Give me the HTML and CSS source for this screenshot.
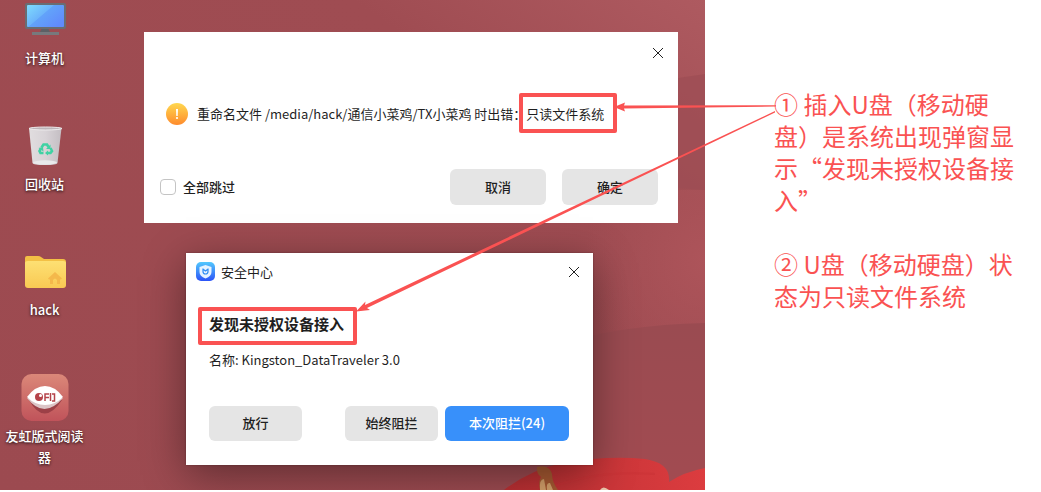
FILE: index.html
```html
<!DOCTYPE html>
<html lang="zh-CN">
<head>
<meta charset="utf-8">
<meta name="viewport" content="width=device-width, initial-scale=1">
<title>U盘只读问题</title>
<link rel="stylesheet" href="styles.css">
</head>
<body>
<main class="page">
  <section class="desktop">
    <svg class="wallpaper" viewBox="0 0 705 490" preserveAspectRatio="none" aria-hidden="true">
      <defs>
        <linearGradient id="sky" x1="0" y1="1" x2="1" y2="0">
          <stop offset="0" stop-color="#9c4a50"/><stop offset=".75" stop-color="#9f4c52"/><stop offset="1" stop-color="#ae5a60"/>
        </linearGradient>
        <linearGradient id="band" x1="0" y1="0" x2="0" y2="1">
          <stop offset="0" stop-color="#9a4b51"/><stop offset="1" stop-color="#a24b51"/>
        </linearGradient>
        <radialGradient id="glow" cx="1" cy=".5" r="1">
          <stop offset="0" stop-color="#ad545a"/><stop offset="1" stop-color="#ad545a" stop-opacity="0"/>
        </radialGradient>
        <linearGradient id="petal" x1="0" y1="0" x2="1" y2="0">
          <stop offset="0" stop-color="#b92f32"/><stop offset="1" stop-color="#dc3c3f"/>
        </linearGradient>
      </defs>
      <rect width="705" height="490" fill="url(#sky)"/>
      <path d="M678 78L705 74V190L678 188Z" fill="#9d4d54" opacity=".7"/>
      <path d="M585 190H705V330H585Z" fill="url(#glow)"/>
      <path d="M560 344Q620 325 705 323V490H560Z" fill="url(#band)"/>
      <path d="M504 490Q530 470 562 463Q608 455 645 459Q671 463 669 482Q684 472 705 468V490Z" fill="url(#petal)"/>
      <path d="M545 490Q590 470 655 474" fill="none" stroke="#c93236" stroke-width="2" opacity=".5"/>
      <path d="M537 467Q549 464 552 474Q552 482 558 490H540Q538 482 541 477Q536 473 537 467Z" fill="#a85a32"/>
      <path d="M540 490Q539 479 544 479L546 490ZM547 490Q546 482 550 483L553 490Z" fill="#d5a06a"/>
      <path d="M600 490Q603 485 609 490Z" fill="#ecc9ae"/>
    </svg>

    <ul class="shortcuts">
      <li class="shortcut">
        <svg class="shortcut-icon" viewBox="0 0 48 48" aria-hidden="true">
          <defs><linearGradient id="screen" x1="0" y1="0" x2="1" y2=".7"><stop offset="0" stop-color="#7fdcfd"/><stop offset=".48" stop-color="#6cb4fb"/><stop offset=".5" stop-color="#62a3fa"/><stop offset="1" stop-color="#618bfc"/></linearGradient></defs>
          <path d="M21 32h6l2 4H19Z" fill="#5d6065"/><path d="M11 36h27v3H11Z" fill="#77797d"/>
          <rect x="4" y="7" width="41" height="26" rx="2" fill="#696d73"/><rect x="6" y="9" width="37" height="22" rx="1" fill="url(#screen)"/>
        </svg>
        <span class="shortcut-name">计算机</span>
      </li>
      <li class="shortcut">
        <svg class="shortcut-icon" viewBox="0 0 48 48" aria-hidden="true">
          <defs><linearGradient id="bin"><stop offset="0" stop-color="#e1dddf"/><stop offset=".5" stop-color="#d8d3d7"/><stop offset="1" stop-color="#c4bec3"/></linearGradient></defs>
          <path d="M8 6L11.500 41Q12 43 24 43Q36 43 36.500 41L40.500 6Z" fill="url(#bin)"/>
          <ellipse cx="24.500" cy="6.500" rx="16.500" ry="1.500" fill="#bdb6ba" stroke="#eeeced"/>
          <ellipse cx="24" cy="40.500" rx="12" ry="2.200" fill="#e9e9eb"/>
          <g fill="none" stroke="#3fd2a3" stroke-width="2.600"><path d="M20.500 25.500L22.500 22.500H26L27.500 25"/><path d="M29.500 26L31 29L29.500 31H26"/><path d="M22.500 31H19.500L18.500 29L20 26.500"/></g>
          <path d="M29.500 22.500v4.500h-4.500ZM27 28.500v5l-3-2.500ZM17.500 26l4.500-1 .500 4.500Z" fill="#3fd2a3"/>
        </svg>
        <span class="shortcut-name">回收站</span>
      </li>
      <li class="shortcut">
        <svg class="shortcut-icon" viewBox="0 0 48 48" aria-hidden="true">
          <defs><linearGradient id="folder" x1="0" y1="0" x2="0" y2="1"><stop offset="0" stop-color="#fde073"/><stop offset="1" stop-color="#f9c953"/></linearGradient></defs>
          <path d="M4 10Q4 8 6 8H17Q19 8 20 9L23 11H42Q45 11 45 14V20H4Z" fill="#f3c045"/>
          <path d="M4 15Q4 13 7 13H42Q45 13 45 15V37Q45 40 42 40H7Q4 40 4 37Z" fill="url(#folder)"/>
          <path d="M27 30.500L34 24L41 30.500L39.500 31.500H39V36H36V32Q34 29 32 32V36H29V31.500H28Z" fill="#f4b84b"/>
        </svg>
        <span class="shortcut-name">hack</span>
      </li>
      <li class="shortcut">
        <svg class="shortcut-icon" viewBox="0 0 48 48" aria-hidden="true">
          <defs><linearGradient id="ofd" x1="0" y1="0" x2="0" y2="1"><stop offset="0" stop-color="#db8879"/><stop offset="1" stop-color="#c0535a"/></linearGradient></defs>
          <rect x=".5" width="47" height="47" rx="10" fill="url(#ofd)"/>
          <path d="M8 26Q23 53 41 26Z" fill="#9c4047"/><path d="M6 24Q23 46 42 24Z" fill="#dcc4c6"/>
          <path d="M6 23Q14 12 24 12T42 23Q34 31 24 31T6 23Z" fill="#fff"/>
          <circle cx="18" cy="23" r="4" fill="#b5434a"/><circle cx="19.500" cy="21.500" r="1.500" fill="#fff"/>
          <path d="M24 27V20H28M24 23.500H28M29.500 19V27M31 20H33.500V27H31" fill="none" stroke="#b5434a" stroke-width="1.500"/>
        </svg>
        <span class="shortcut-name">友虹版式阅读器</span>
      </li>
    </ul>

    <section class="window error-window" role="dialog" aria-label="重命名出错">
      <header class="error-bar">
        <button class="close" type="button" aria-label="关闭"><svg viewBox="0 0 12 12"><path d="M1 1L11 11M11 1L1 11"/></svg></button>
      </header>
      <div class="error-message">
        <svg class="warning" viewBox="0 0 22 22" aria-hidden="true">
          <defs><linearGradient id="warn" x1="0" y1="0" x2="0" y2="1"><stop offset="0" stop-color="#ffd84f"/><stop offset="1" stop-color="#fe8b2c"/></linearGradient></defs>
          <circle cx="11" cy="11" r="11" fill="url(#warn)"/><path d="M10 6h2l-.3 7h-1.400Z" fill="#fff"/><circle cx="11" cy="15" r="1.100" fill="#fff"/>
        </svg>
        <p class="text">重命名文件 /media/hack/通信小菜鸡/TX小菜鸡 时出错：只读文件系统</p>
      </div>
      <footer class="error-actions">
        <label class="skip"><input class="check" type="checkbox"><span>全部跳过</span></label>
        <button class="button" type="button">取消</button>
        <button class="button" type="button">确定</button>
      </footer>
    </section>

    <section class="window security-window" role="dialog" aria-label="安全中心">
      <header class="security-bar">
        <svg class="shield" viewBox="0 0 20 20" aria-hidden="true">
          <defs><linearGradient id="shield" x1="0" y1="0" x2="0" y2="1"><stop offset="0" stop-color="#53c8fd"/><stop offset="1" stop-color="#2b53f7"/></linearGradient></defs>
          <rect width="19" height="19" rx="5" fill="url(#shield)"/>
          <path d="M9.500 3L15.500 5V10Q15.500 14 9.500 16.500Q3.500 14 3.500 10V5Z" fill="#e6f3ff"/>
          <path d="M7 6.500V9.500A2.500 2.500 0 0 0 12 9.500V6.500M7.500 7.500L9.500 9L11.500 7.500" fill="none" stroke="#2c8cf4" stroke-width="1.200"/>
        </svg>
        <span class="security-title">安全中心</span>
        <button class="close" type="button" aria-label="关闭"><svg viewBox="0 0 12 12"><path d="M1 1L11 11M11 1L1 11"/></svg></button>
      </header>
      <div class="security-body">
        <h2 class="heading">发现未授权设备接入</h2>
        <p class="text">名称: Kingston_DataTraveler 3.0</p>
      </div>
      <footer class="security-actions">
        <button class="button allow" type="button">放行</button>
        <button class="button" type="button">始终阻拦</button>
        <button class="button primary" type="button">本次阻拦(24)</button>
      </footer>
    </section>
  </section>

  <aside class="notes">
    <p class="note">① 插入U盘（移动硬盘）是系统出现弹窗显示“发现未授权设备接入”</p>
    <p class="note">② U盘（移动硬盘）状态为只读文件系统</p>
  </aside>

  <svg class="marks" width="1041" height="492" viewBox="0 0 1041 492" aria-hidden="true">
    <g fill="none" stroke="#fa5252" stroke-width="4" stroke-linejoin="round">
      <rect x="521" y="95" width="94" height="36"/><rect x="200" y="309" width="155" height="34"/>
    </g>
    <g fill="#fa5252">
      <path d="M776 105.200L624 105.500L625 102.500L614 107L625 111.500L624 108.500L776 106.500Z"/>
      <path d="M775 111L365 305L365.500 301.500L356 311.500L370 310L367 308L775 112.500Z"/>
    </g>
  </svg>
</main>
</body>
</html>
```

FILE: styles.css
```css
* { box-sizing: border-box; }

body {
  margin: 0;
  overflow: hidden;
  background: #fff;
  color: #1f1f1f;
  font-family: "Noto Sans CJK SC", "Noto Sans", sans-serif;
  font-size: 13px;
  line-height: 20px;
}

p, h2, ul { margin: 0; padding: 0; }

.page {
  position: relative;
  display: grid;
  grid-template-columns: 705fr 336fr;
  align-items: start;
}

.desktop {
  position: relative;
  overflow: hidden;
  min-height: calc(100vh - 2px);
  padding-left: 5px;
}

.wallpaper {
  position: absolute;
  inset: 0;
  width: 100%;
  height: 100%;
}

.shortcuts {
  position: relative;
  display: grid;
  grid-template-rows: repeat(3, 126px) auto;
  width: 79px;
  margin-top: -4px;
  list-style: none;
}

.shortcut {
  display: flex;
  flex-direction: column;
  align-items: center;
  gap: 3px;
}

.shortcut-icon {
  flex: none;
  width: 48px;
  height: 48px;
}

.shortcut-name {
  color: #fff;
  font-weight: 500;
  line-height: 21px;
  text-align: center;
  text-shadow: 0 1px 3px rgba(0, 0, 0, .8);
}

.window {
  position: absolute;
  display: flex;
  flex-direction: column;
  background: #fff;
}

.error-window {
  top: 32px;
  left: 144px;
  width: 534px;
  padding: 12px 20px 18px 16px;
}

.security-window {
  top: 253px;
  left: 186px;
  width: 407px;
  padding: 8px 10px 24px;
  box-shadow: 0 10px 40px rgba(0, 0, 0, .4), 0 0 2px rgba(0, 0, 0, .3);
}

.close {
  display: grid;
  place-items: center;
  width: 18px;
  height: 18px;
  margin-left: auto;
  padding: 0;
  border: 0;
  background: none;
}

.close svg {
  width: 12px;
  height: 12px;
  fill: none;
  stroke: #222;
  stroke-width: 1;
}

.error-bar { margin-right: -9px; }

.error-message {
  display: flex;
  align-items: center;
  gap: 9px;
  padding: 41px 0 44px 6px;
}

.warning {
  flex: none;
  width: 22px;
  height: 22px;
}

.error-actions {
  display: flex;
  align-items: center;
  gap: 16px;
}

.skip {
  display: flex;
  align-items: center;
  gap: 7px;
  margin-right: auto;
  font-weight: 500;
}

.check {
  appearance: none;
  width: 16px;
  height: 16px;
  margin: 0;
  border: 1px solid #c4c4c4;
  border-radius: 4px;
  background: #fff;
}

.button {
  width: 96px;
  height: 36px;
  padding: 0;
  border: 0;
  border-radius: 6px;
  background: #e5e5e5;
  color: inherit;
  font: inherit;
  font-weight: 500;
}

.security-bar {
  display: flex;
  align-items: center;
  gap: 5px;
  height: 22px;
}

.shield {
  width: 20px;
  height: 20px;
}

.security-body {
  padding: 29px 13px 36px;
}

.heading {
  margin-bottom: 14px;
  font-size: 15px;
  font-weight: 700;
  line-height: 24px;
}

.security-actions {
  display: flex;
  gap: 7px;
  padding: 0 14px 0 13px;
}

.security-actions .button {
  width: 93px;
  height: 35px;
  padding-bottom: 2px;
}

.security-actions .allow { margin-right: auto; }

.security-actions .primary {
  width: 124px;
  background: #3890fa;
  color: #fff;
}

.notes {
  display: grid;
  gap: 32px;
  padding: 88px 24px 0 69px;
  color: #fa5252;
  font-size: 24px;
  line-height: 32px;
}

.marks {
  position: absolute;
  top: 0;
  left: 0;
  pointer-events: none;
}
```
